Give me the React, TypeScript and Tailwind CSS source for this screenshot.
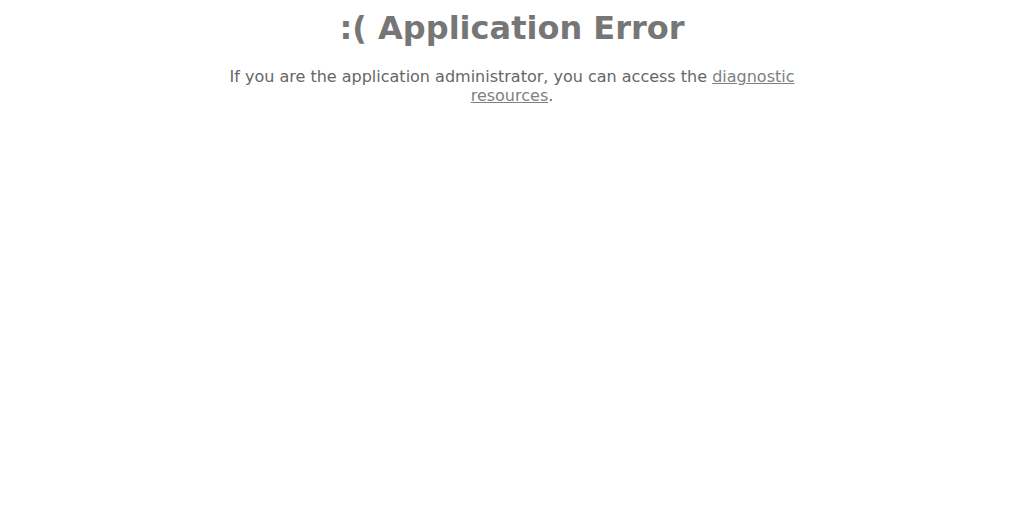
export default function App() {
  return (
    <div className="min-h-[516px] bg-white font-['DejaVu_Sans',sans-serif] text-center">
      <h1 className="pt-[9px] text-[32px] font-bold leading-[38px] text-[#767676]">:( Application Error</h1>
      <p className="mx-auto mt-[20px] w-[600px] text-[16px] leading-[19px] text-[#666666]">
        If you are the application administrator, you can access the{" "}
        <a href="#" className="text-[#808080] underline">diagnostic resources</a>.
      </p>
    </div>
  );
}
